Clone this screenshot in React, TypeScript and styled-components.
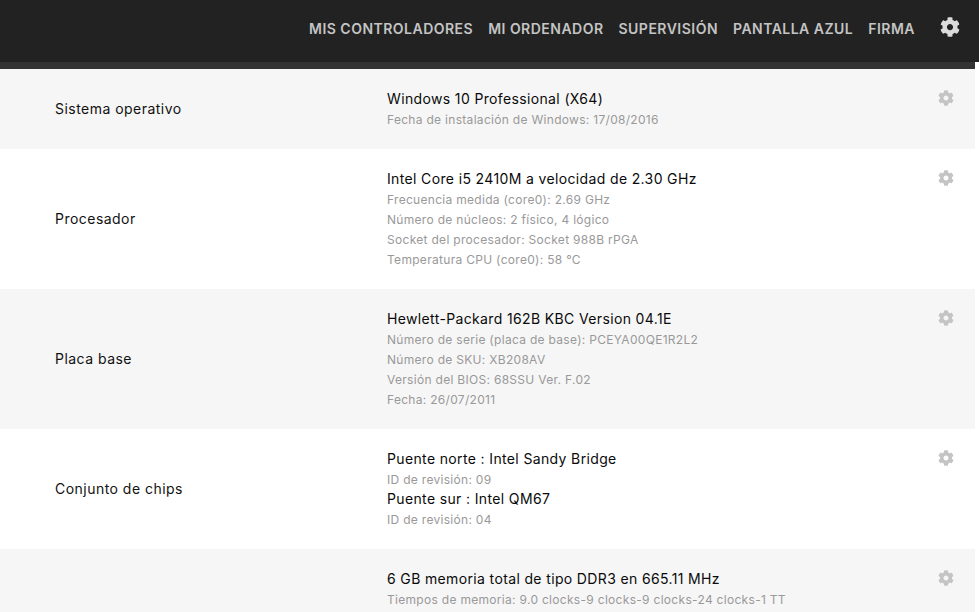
import React from 'react';
import styled, { createGlobalStyle } from 'styled-components';
import { FaCog } from 'react-icons/fa';

const GlobalStyle = createGlobalStyle`
  html, body {
    margin: 0;
    padding: 0;
    height: 100%;
    overflow: hidden;
    background: #fff;
    font-family: "Inter", "Noto Sans", "Liberation Sans", sans-serif;
  }
`

const Page = styled.div`
  width: 979px;
  height: 612px;
  overflow: hidden;
`

const Header = styled.div`
  height: 62px;
  background: #222222;
  display: flex;
  justify-content: flex-end;
  align-items: flex-start;
  padding-right: 19px;
`

const Nav = styled.div`
  display: flex;
  gap: 15px;
  margin-top: 20px;
  margin-right: 25px;
`

const NavItem = styled.a`
  color: #c4c4c4;
  font-size: 14px;
  line-height: 18px;
  font-weight: 600;
  letter-spacing: 0.48px;
  white-space: nowrap;
`

const HeaderGear = styled(FaCog)`
  color: #dcdcdc;
  width: 20px;
  height: 20px;
  margin-top: 17px;
`

const Content = styled.div`
  width: 975px;
`

const SubBar = styled.div`
  height: 7px;
  background: #333333;
`

const Row = styled.div<{ $shaded: boolean }>`
  display: flex;
  align-items: center;
  position: relative;
  padding: 20px 0;
  background: ${p => (p.$shaded ? '#f6f6f6' : '#ffffff')};
`

const Label = styled.div`
  width: 387px;
  box-sizing: border-box;
  padding-left: 55px;
  color: #111;
  font-size: 14px;
  line-height: 20px;
  letter-spacing: 0.47px;
`

const Details = styled.div`
  flex: 1;
`

const Title = styled.div`
  color: #0a0a0a;
  font-size: 14px;
  line-height: 20px;
  letter-spacing: 0.36px;
`

const Info = styled.div`
  color: #999999;
  font-size: 12px;
  line-height: 20px;
  letter-spacing: 0.3px;
  padding-top: 1px;
  margin-bottom: -1px;
`

const RowGear = styled(FaCog)`
  position: absolute;
  top: 21px;
  right: 21px;
  width: 16px;
  height: 16px;
  color: #c4c4c4;
`

type Line = { text: string; main?: boolean };

const rows: Array<{ label: string; lines: Array<Line> }> = [
  {
    label: 'Sistema operativo',
    lines: [
      { text: 'Windows 10 Professional (X64)', main: true },
      { text: 'Fecha de instalación de Windows: 17/08/2016' },
    ],
  },
  {
    label: 'Procesador',
    lines: [
      { text: 'Intel Core i5 2410M a velocidad de 2.30 GHz', main: true },
      { text: 'Frecuencia medida (core0): 2.69 GHz' },
      { text: 'Número de núcleos: 2 físico, 4 lógico' },
      { text: 'Socket del procesador: Socket 988B rPGA' },
      { text: 'Temperatura CPU (core0): 58 °C' },
    ],
  },
  {
    label: 'Placa base',
    lines: [
      { text: 'Hewlett-Packard 162B KBC Version 04.1E', main: true },
      { text: 'Número de serie (placa de base): PCEYA00QE1R2L2' },
      { text: 'Número de SKU: XB208AV' },
      { text: 'Versión del BIOS: 68SSU Ver. F.02' },
      { text: 'Fecha: 26/07/2011' },
    ],
  },
  {
    label: 'Conjunto de chips',
    lines: [
      { text: 'Puente norte : Intel Sandy Bridge', main: true },
      { text: 'ID de revisión: 09' },
      { text: 'Puente sur : Intel QM67', main: true },
      { text: 'ID de revisión: 04' },
    ],
  },
  {
    label: '',
    lines: [
      { text: '6 GB memoria total de tipo DDR3 en 665.11 MHz', main: true },
      { text: 'Tiempos de memoria: 9.0 clocks-9 clocks-9 clocks-24 clocks-1 TT' },
    ],
  },
];

function App() {
  return (<>
    <GlobalStyle />
    <Page>
      <Header>
        <Nav>
          {['MIS CONTROLADORES', 'MI ORDENADOR', 'SUPERVISIÓN', 'PANTALLA AZUL', 'FIRMA'].map(item => {
            return <NavItem key={item}>{item}</NavItem>
          })}
        </Nav>
        <HeaderGear />
      </Header>
      <Content>
        <SubBar />
        {rows.map((row, i) => {
          return <Row key={i} $shaded={i % 2 === 0}>
            <Label>{row.label}</Label>
            <Details>
              {row.lines.map(line => {
                return line.main
                  ? <Title key={line.text}>{line.text}</Title>
                  : <Info key={line.text}>{line.text}</Info>
              })}
            </Details>
            <RowGear />
          </Row>
        })}
      </Content>
    </Page>
  </>
  );
}

export default App;
